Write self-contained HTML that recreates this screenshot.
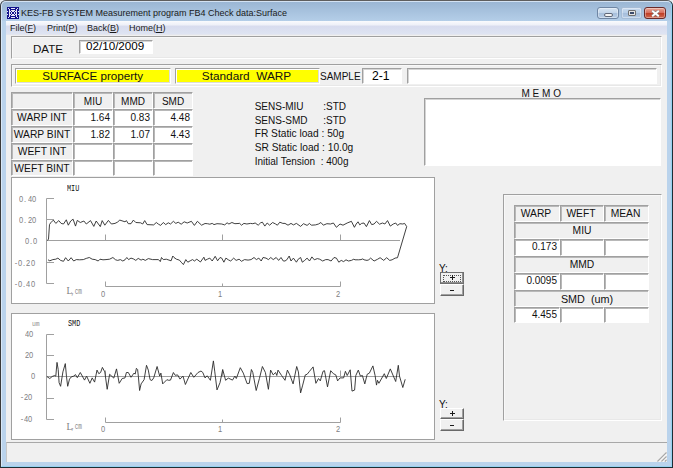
<!DOCTYPE html><html><head><meta charset="utf-8"><style>html,body{margin:0;padding:0;width:673px;height:468px;overflow:hidden;position:relative;background:#e8ecf0;font-family:"Liberation Sans",sans-serif}u{text-decoration:underline}</style></head><body>
<div style="position:absolute;left:0px;top:0px;width:673px;height:468px;background:#bad3ec;border-radius:6px 6px 0 0;"></div>
<div style="position:absolute;left:0px;top:0px;width:673px;height:21px;background:linear-gradient(#98b4d2,#b4cee8);border-radius:6px 6px 0 0;"></div>
<div style="position:absolute;left:0px;top:0px;width:673px;height:468px;box-sizing:border-box;border:1px solid #3a3a3a;border-top-color:#5e5e5e;border-right-color:#1e2e36;border-bottom-color:#1e2e36;border-radius:6px 6px 0 0;"></div>
<div style="position:absolute;left:1px;top:1px;width:671px;height:466px;box-sizing:border-box;border:1px solid rgba(225,238,250,0.8);border-right-color:#96d2f0;border-bottom-color:#96d2f0;border-radius:5px 5px 0 0;"></div>
<svg style="position:absolute;left:7px;top:7px" width="12" height="12" viewBox="0 0 12 12"><rect width="12" height="12" fill="#e8e8f8"/><g fill="#12128c"><rect x="0" y="0" width="1" height="1"/><rect x="1" y="0" width="1" height="1"/><rect x="2" y="0" width="1" height="1"/><rect x="3" y="0" width="1" height="1"/><rect x="4" y="0" width="1" height="1"/><rect x="5" y="0" width="1" height="1"/><rect x="6" y="0" width="1" height="1"/><rect x="7" y="0" width="1" height="1"/><rect x="8" y="0" width="1" height="1"/><rect x="9" y="0" width="1" height="1"/><rect x="10" y="0" width="1" height="1"/><rect x="11" y="0" width="1" height="1"/><rect x="0" y="1" width="1" height="1"/><rect x="2" y="1" width="1" height="1"/><rect x="3" y="1" width="1" height="1"/><rect x="8" y="1" width="1" height="1"/><rect x="9" y="1" width="1" height="1"/><rect x="11" y="1" width="1" height="1"/><rect x="0" y="2" width="1" height="1"/><rect x="1" y="2" width="1" height="1"/><rect x="3" y="2" width="1" height="1"/><rect x="4" y="2" width="1" height="1"/><rect x="5" y="2" width="1" height="1"/><rect x="6" y="2" width="1" height="1"/><rect x="7" y="2" width="1" height="1"/><rect x="8" y="2" width="1" height="1"/><rect x="10" y="2" width="1" height="1"/><rect x="11" y="2" width="1" height="1"/><rect x="0" y="3" width="1" height="1"/><rect x="1" y="3" width="1" height="1"/><rect x="3" y="3" width="1" height="1"/><rect x="8" y="3" width="1" height="1"/><rect x="10" y="3" width="1" height="1"/><rect x="11" y="3" width="1" height="1"/><rect x="1" y="4" width="1" height="1"/><rect x="4" y="4" width="1" height="1"/><rect x="7" y="4" width="1" height="1"/><rect x="10" y="4" width="1" height="1"/><rect x="0" y="5" width="1" height="1"/><rect x="1" y="5" width="1" height="1"/><rect x="3" y="5" width="1" height="1"/><rect x="5" y="5" width="1" height="1"/><rect x="6" y="5" width="1" height="1"/><rect x="8" y="5" width="1" height="1"/><rect x="10" y="5" width="1" height="1"/><rect x="11" y="5" width="1" height="1"/><rect x="0" y="6" width="1" height="1"/><rect x="1" y="6" width="1" height="1"/><rect x="3" y="6" width="1" height="1"/><rect x="5" y="6" width="1" height="1"/><rect x="6" y="6" width="1" height="1"/><rect x="8" y="6" width="1" height="1"/><rect x="10" y="6" width="1" height="1"/><rect x="11" y="6" width="1" height="1"/><rect x="1" y="7" width="1" height="1"/><rect x="4" y="7" width="1" height="1"/><rect x="7" y="7" width="1" height="1"/><rect x="10" y="7" width="1" height="1"/><rect x="0" y="8" width="1" height="1"/><rect x="1" y="8" width="1" height="1"/><rect x="3" y="8" width="1" height="1"/><rect x="8" y="8" width="1" height="1"/><rect x="10" y="8" width="1" height="1"/><rect x="11" y="8" width="1" height="1"/><rect x="0" y="9" width="1" height="1"/><rect x="1" y="9" width="1" height="1"/><rect x="3" y="9" width="1" height="1"/><rect x="4" y="9" width="1" height="1"/><rect x="5" y="9" width="1" height="1"/><rect x="6" y="9" width="1" height="1"/><rect x="7" y="9" width="1" height="1"/><rect x="8" y="9" width="1" height="1"/><rect x="10" y="9" width="1" height="1"/><rect x="11" y="9" width="1" height="1"/><rect x="0" y="10" width="1" height="1"/><rect x="2" y="10" width="1" height="1"/><rect x="3" y="10" width="1" height="1"/><rect x="8" y="10" width="1" height="1"/><rect x="9" y="10" width="1" height="1"/><rect x="11" y="10" width="1" height="1"/><rect x="0" y="11" width="1" height="1"/><rect x="1" y="11" width="1" height="1"/><rect x="2" y="11" width="1" height="1"/><rect x="3" y="11" width="1" height="1"/><rect x="4" y="11" width="1" height="1"/><rect x="5" y="11" width="1" height="1"/><rect x="6" y="11" width="1" height="1"/><rect x="7" y="11" width="1" height="1"/><rect x="8" y="11" width="1" height="1"/><rect x="9" y="11" width="1" height="1"/><rect x="10" y="11" width="1" height="1"/><rect x="11" y="11" width="1" height="1"/></g></svg>
<div style="position:absolute;left:21.00px;top:9.18px;font-size:9px;line-height:9px;white-space:pre;font-family:'Liberation Sans', sans-serif;color:#1a1a1a;">KES-FB SYSTEM Measurement program FB4 Check data:Surface</div>
<div style="position:absolute;left:597px;top:7px;width:22px;height:12px;box-sizing:border-box;border:1px solid #6f86a4;border-radius:3px;background:linear-gradient(#d6e4f2,#c4d6ea 45%,#a8c0dc 55%,#b8cde6);box-shadow:inset 0 0 0 1px rgba(255,255,255,0.35);"><div style="position:absolute;left:6px;top:5px;width:9px;height:4px;background:#f4f4f4;border:1px solid #606878;border-radius:2px;box-sizing:border-box"></div></div>
<div style="position:absolute;left:621px;top:7px;width:21px;height:12px;box-sizing:border-box;border:1px solid #a6bcd6;border-radius:2px;background:linear-gradient(#c8daee,#b8cee8 45%,#a6bedb 55%,#b4cae4);box-shadow:inset 0 0 0 1px rgba(255,255,255,0.35);"><div style="position:absolute;left:6px;top:2px;width:8px;height:6px;background:#e4e4e4;border:1px solid #707070;box-sizing:border-box;border-radius:1px"><div style="margin:1px 1px;height:2px;background:#3a4a6a"></div></div></div>
<div style="position:absolute;left:644px;top:7px;width:22px;height:12px;box-sizing:border-box;border:1px solid #6a2a2a;border-radius:3px;background:linear-gradient(#e8a898,#d87060 45%,#c04028 55%,#d06850);box-shadow:inset 0 0 0 1px rgba(255,255,255,0.35);"><svg style="position:absolute;left:6px;top:2px" width="9" height="7"><path d="M1.2 0.8L7.8 6.2M7.8 0.8L1.2 6.2" stroke="#808080" stroke-width="3"/><path d="M1.2 0.8L7.8 6.2M7.8 0.8L1.2 6.2" stroke="#fff" stroke-width="1.8"/></svg></div>
<div style="position:absolute;left:6px;top:21px;width:661px;height:13px;background:linear-gradient(#fafbfd,#eef0f8 30%,#d8dcee 40%,#dee4f2);"></div>
<div style="position:absolute;left:6px;top:34px;width:661px;height:1px;background:#e4e6ee;"></div>
<div style="position:absolute;left:10.00px;top:24.28px;font-size:9px;line-height:9px;white-space:pre;font-family:'Liberation Sans', sans-serif;color:#1a1a1a;">File(<u>F</u>)</div>
<div style="position:absolute;left:47.00px;top:24.28px;font-size:9px;line-height:9px;white-space:pre;font-family:'Liberation Sans', sans-serif;color:#1a1a1a;">Print(<u>P</u>)</div>
<div style="position:absolute;left:87.00px;top:24.28px;font-size:9px;line-height:9px;white-space:pre;font-family:'Liberation Sans', sans-serif;color:#1a1a1a;">Back(<u>B</u>)</div>
<div style="position:absolute;left:129.00px;top:24.28px;font-size:9px;line-height:9px;white-space:pre;font-family:'Liberation Sans', sans-serif;color:#1a1a1a;">Home(<u>H</u>)</div>
<div style="position:absolute;left:6px;top:35px;width:661px;height:427px;background:#f0f0f0;"></div>
<div style="position:absolute;left:11px;top:36px;width:651px;height:23px;box-sizing:border-box;border-top:1px solid #a0a0a0;border-left:1px solid #a0a0a0;border-right:1px solid #fff;border-bottom:1px solid #fff;"></div>
<div style="position:absolute;left:12px;top:37px;width:649px;height:21px;box-sizing:border-box;border-top:1px solid #f8f8f8;border-left:1px solid #f8f8f8;border-right:1px solid #e8e8e8;border-bottom:1px solid #e8e8e8;"></div>
<div style="position:absolute;left:33.00px;top:42.98px;font-size:11.6px;line-height:11.6px;white-space:pre;font-family:'Liberation Sans', sans-serif;color:#111;">DATE</div>
<div style="position:absolute;left:79px;top:40px;width:74px;height:14px;box-sizing:border-box;background:#fff;border-top:1px solid #a0a0a0;border-left:1px solid #a0a0a0;border-right:1px solid #fff;border-bottom:1px solid #fff;box-shadow:inset 1px 1px 0 #d4d4d4;"></div>
<div style="position:absolute;left:86.00px;top:40.24px;font-size:11.65px;line-height:11.65px;white-space:pre;font-family:'Liberation Sans', sans-serif;color:#000;">02/10/2009</div>
<div style="position:absolute;left:11px;top:64px;width:651px;height:23px;box-sizing:border-box;border-top:1px solid #a0a0a0;border-left:1px solid #a0a0a0;border-right:1px solid #fff;border-bottom:1px solid #fff;"></div>
<div style="position:absolute;left:12px;top:65px;width:649px;height:21px;box-sizing:border-box;border-top:1px solid #f8f8f8;border-left:1px solid #f8f8f8;border-right:1px solid #e8e8e8;border-bottom:1px solid #e8e8e8;"></div>
<div style="position:absolute;left:15px;top:68px;width:156px;height:16px;box-sizing:border-box;background:#ffff00;border-top:1px solid #a0a0a0;border-left:1px solid #a0a0a0;border-right:1px solid #fff;border-bottom:1px solid #fff;box-shadow:inset 1px 1px 0 #fff, inset -1px -1px 0 #dcdcdc;"></div>
<div style="position:absolute;left:15.20px;top:70.14px;font-size:11.65px;line-height:11.65px;white-space:pre;font-family:'Liberation Sans', sans-serif;width:155px;text-align:center;color:#111;">SURFACE property</div>
<div style="position:absolute;left:175px;top:68px;width:145px;height:16px;box-sizing:border-box;background:#ffff00;border-top:1px solid #a0a0a0;border-left:1px solid #a0a0a0;border-right:1px solid #fff;border-bottom:1px solid #fff;box-shadow:inset 1px 1px 0 #fff, inset -1px -1px 0 #dcdcdc;"></div>
<div style="position:absolute;left:174.50px;top:71.31px;font-size:11.8px;line-height:11.8px;white-space:pre;font-family:'Liberation Sans', sans-serif;width:144px;text-align:center;color:#111;">Standard  WARP</div>
<div style="position:absolute;left:320.00px;top:71.73px;font-size:10px;line-height:10px;white-space:pre;font-family:'Liberation Sans', sans-serif;color:#111;">SAMPLE</div>
<div style="position:absolute;left:362px;top:68px;width:40px;height:16px;box-sizing:border-box;background:#fff;border-top:1px solid #a0a0a0;border-left:1px solid #a0a0a0;border-right:1px solid #fff;border-bottom:1px solid #fff;box-shadow:inset 1px 1px 0 #d4d4d4;"></div>
<div style="position:absolute;left:372.00px;top:70.17px;font-size:12.2px;line-height:12.2px;white-space:pre;font-family:'Liberation Sans', sans-serif;color:#000;">2-1</div>
<div style="position:absolute;left:407px;top:68px;width:250px;height:16px;box-sizing:border-box;background:#fff;border-top:1px solid #a0a0a0;border-left:1px solid #a0a0a0;border-right:1px solid #fff;border-bottom:1px solid #fff;box-shadow:inset 1px 1px 0 #d4d4d4;"></div>
<div style="position:absolute;left:11px;top:92px;width:62px;height:17px;box-sizing:border-box;background:#f0f0f0;border-top:1px solid #a0a0a0;border-left:1px solid #a0a0a0;border-right:1px solid #fff;border-bottom:1px solid #fff;box-shadow:inset 1px 1px 0 #b8b8b8;"></div>
<div style="position:absolute;left:73px;top:92px;width:40px;height:17px;box-sizing:border-box;background:#f0f0f0;border-top:1px solid #a0a0a0;border-left:1px solid #a0a0a0;border-right:1px solid #fff;border-bottom:1px solid #fff;box-shadow:inset 1px 1px 0 #b8b8b8;"></div>
<div style="position:absolute;left:73.00px;top:96.84px;font-size:10px;line-height:10px;white-space:pre;font-family:'Liberation Sans', sans-serif;width:40px;text-align:center;color:#111;">MIU</div>
<div style="position:absolute;left:113px;top:92px;width:40px;height:17px;box-sizing:border-box;background:#f0f0f0;border-top:1px solid #a0a0a0;border-left:1px solid #a0a0a0;border-right:1px solid #fff;border-bottom:1px solid #fff;box-shadow:inset 1px 1px 0 #b8b8b8;"></div>
<div style="position:absolute;left:113.00px;top:96.84px;font-size:10px;line-height:10px;white-space:pre;font-family:'Liberation Sans', sans-serif;width:40px;text-align:center;color:#111;">MMD</div>
<div style="position:absolute;left:153px;top:92px;width:40px;height:17px;box-sizing:border-box;background:#f0f0f0;border-top:1px solid #a0a0a0;border-left:1px solid #a0a0a0;border-right:1px solid #fff;border-bottom:1px solid #fff;box-shadow:inset 1px 1px 0 #b8b8b8;"></div>
<div style="position:absolute;left:153.00px;top:96.84px;font-size:10px;line-height:10px;white-space:pre;font-family:'Liberation Sans', sans-serif;width:40px;text-align:center;color:#111;">SMD</div>
<div style="position:absolute;left:11px;top:109px;width:62px;height:17px;box-sizing:border-box;background:#f0f0f0;border-top:1px solid #a0a0a0;border-left:1px solid #a0a0a0;border-right:1px solid #fff;border-bottom:1px solid #fff;box-shadow:inset 1px 1px 0 #b8b8b8;"></div>
<div style="position:absolute;left:11.00px;top:113.38px;font-size:10.3px;line-height:10.3px;white-space:pre;font-family:'Liberation Sans', sans-serif;width:62px;text-align:center;color:#111;">WARP INT</div>
<div style="position:absolute;left:73px;top:109px;width:40px;height:17px;box-sizing:border-box;background:#fff;border-top:1px solid #a0a0a0;border-left:1px solid #a0a0a0;border-right:1px solid #fff;border-bottom:1px solid #fff;box-shadow:inset 1px 1px 0 #b8b8b8;"></div>
<div style="position:absolute;left:72.00px;top:113.03px;font-size:10px;line-height:10px;white-space:pre;font-family:'Liberation Sans', sans-serif;width:38px;text-align:right;color:#111;">1.64</div>
<div style="position:absolute;left:113px;top:109px;width:40px;height:17px;box-sizing:border-box;background:#fff;border-top:1px solid #a0a0a0;border-left:1px solid #a0a0a0;border-right:1px solid #fff;border-bottom:1px solid #fff;box-shadow:inset 1px 1px 0 #b8b8b8;"></div>
<div style="position:absolute;left:112.00px;top:113.03px;font-size:10px;line-height:10px;white-space:pre;font-family:'Liberation Sans', sans-serif;width:38px;text-align:right;color:#111;">0.83</div>
<div style="position:absolute;left:153px;top:109px;width:40px;height:17px;box-sizing:border-box;background:#fff;border-top:1px solid #a0a0a0;border-left:1px solid #a0a0a0;border-right:1px solid #fff;border-bottom:1px solid #fff;box-shadow:inset 1px 1px 0 #b8b8b8;"></div>
<div style="position:absolute;left:152.00px;top:113.03px;font-size:10px;line-height:10px;white-space:pre;font-family:'Liberation Sans', sans-serif;width:38px;text-align:right;color:#111;">4.48</div>
<div style="position:absolute;left:11px;top:126px;width:62px;height:17px;box-sizing:border-box;background:#f0f0f0;border-top:1px solid #a0a0a0;border-left:1px solid #a0a0a0;border-right:1px solid #fff;border-bottom:1px solid #fff;box-shadow:inset 1px 1px 0 #b8b8b8;"></div>
<div style="position:absolute;left:11.00px;top:130.38px;font-size:10.3px;line-height:10.3px;white-space:pre;font-family:'Liberation Sans', sans-serif;width:62px;text-align:center;color:#111;">WARP BINT</div>
<div style="position:absolute;left:73px;top:126px;width:40px;height:17px;box-sizing:border-box;background:#fff;border-top:1px solid #a0a0a0;border-left:1px solid #a0a0a0;border-right:1px solid #fff;border-bottom:1px solid #fff;box-shadow:inset 1px 1px 0 #b8b8b8;"></div>
<div style="position:absolute;left:72.00px;top:130.03px;font-size:10px;line-height:10px;white-space:pre;font-family:'Liberation Sans', sans-serif;width:38px;text-align:right;color:#111;">1.82</div>
<div style="position:absolute;left:113px;top:126px;width:40px;height:17px;box-sizing:border-box;background:#fff;border-top:1px solid #a0a0a0;border-left:1px solid #a0a0a0;border-right:1px solid #fff;border-bottom:1px solid #fff;box-shadow:inset 1px 1px 0 #b8b8b8;"></div>
<div style="position:absolute;left:112.00px;top:130.03px;font-size:10px;line-height:10px;white-space:pre;font-family:'Liberation Sans', sans-serif;width:38px;text-align:right;color:#111;">1.07</div>
<div style="position:absolute;left:153px;top:126px;width:40px;height:17px;box-sizing:border-box;background:#fff;border-top:1px solid #a0a0a0;border-left:1px solid #a0a0a0;border-right:1px solid #fff;border-bottom:1px solid #fff;box-shadow:inset 1px 1px 0 #b8b8b8;"></div>
<div style="position:absolute;left:152.00px;top:130.03px;font-size:10px;line-height:10px;white-space:pre;font-family:'Liberation Sans', sans-serif;width:38px;text-align:right;color:#111;">4.43</div>
<div style="position:absolute;left:11px;top:143px;width:62px;height:17px;box-sizing:border-box;background:#f0f0f0;border-top:1px solid #a0a0a0;border-left:1px solid #a0a0a0;border-right:1px solid #fff;border-bottom:1px solid #fff;box-shadow:inset 1px 1px 0 #b8b8b8;"></div>
<div style="position:absolute;left:11.00px;top:147.38px;font-size:10.3px;line-height:10.3px;white-space:pre;font-family:'Liberation Sans', sans-serif;width:62px;text-align:center;color:#111;">WEFT INT</div>
<div style="position:absolute;left:73px;top:143px;width:40px;height:17px;box-sizing:border-box;background:#fff;border-top:1px solid #a0a0a0;border-left:1px solid #a0a0a0;border-right:1px solid #fff;border-bottom:1px solid #fff;box-shadow:inset 1px 1px 0 #b8b8b8;"></div>
<div style="position:absolute;left:113px;top:143px;width:40px;height:17px;box-sizing:border-box;background:#fff;border-top:1px solid #a0a0a0;border-left:1px solid #a0a0a0;border-right:1px solid #fff;border-bottom:1px solid #fff;box-shadow:inset 1px 1px 0 #b8b8b8;"></div>
<div style="position:absolute;left:153px;top:143px;width:40px;height:17px;box-sizing:border-box;background:#fff;border-top:1px solid #a0a0a0;border-left:1px solid #a0a0a0;border-right:1px solid #fff;border-bottom:1px solid #fff;box-shadow:inset 1px 1px 0 #b8b8b8;"></div>
<div style="position:absolute;left:11px;top:160px;width:62px;height:16px;box-sizing:border-box;background:#f0f0f0;border-top:1px solid #a0a0a0;border-left:1px solid #a0a0a0;border-right:1px solid #fff;border-bottom:1px solid #fff;box-shadow:inset 1px 1px 0 #b8b8b8;"></div>
<div style="position:absolute;left:11.00px;top:164.38px;font-size:10.3px;line-height:10.3px;white-space:pre;font-family:'Liberation Sans', sans-serif;width:62px;text-align:center;color:#111;">WEFT BINT</div>
<div style="position:absolute;left:73px;top:160px;width:40px;height:16px;box-sizing:border-box;background:#fff;border-top:1px solid #a0a0a0;border-left:1px solid #a0a0a0;border-right:1px solid #fff;border-bottom:1px solid #fff;box-shadow:inset 1px 1px 0 #b8b8b8;"></div>
<div style="position:absolute;left:113px;top:160px;width:40px;height:16px;box-sizing:border-box;background:#fff;border-top:1px solid #a0a0a0;border-left:1px solid #a0a0a0;border-right:1px solid #fff;border-bottom:1px solid #fff;box-shadow:inset 1px 1px 0 #b8b8b8;"></div>
<div style="position:absolute;left:153px;top:160px;width:40px;height:16px;box-sizing:border-box;background:#fff;border-top:1px solid #a0a0a0;border-left:1px solid #a0a0a0;border-right:1px solid #fff;border-bottom:1px solid #fff;box-shadow:inset 1px 1px 0 #b8b8b8;"></div>
<div style="position:absolute;left:254.70px;top:101.73px;font-size:10px;line-height:10px;white-space:pre;font-family:'Liberation Sans', sans-serif;color:#111;">SENS-MIU</div>
<div style="position:absolute;left:323.20px;top:101.73px;font-size:10px;line-height:10px;white-space:pre;font-family:'Liberation Sans', sans-serif;color:#111;">:STD</div>
<div style="position:absolute;left:254.70px;top:115.94px;font-size:10px;line-height:10px;white-space:pre;font-family:'Liberation Sans', sans-serif;color:#111;">SENS-SMD</div>
<div style="position:absolute;left:323.20px;top:115.94px;font-size:10px;line-height:10px;white-space:pre;font-family:'Liberation Sans', sans-serif;color:#111;">:STD</div>
<div style="position:absolute;left:254.70px;top:129.17px;font-size:10.2px;line-height:10.2px;white-space:pre;font-family:'Liberation Sans', sans-serif;color:#111;">FR Static load : 50g</div>
<div style="position:absolute;left:254.70px;top:142.87px;font-size:10.2px;line-height:10.2px;white-space:pre;font-family:'Liberation Sans', sans-serif;color:#111;">SR Static load : 10.0g</div>
<div style="position:absolute;left:254.70px;top:156.63px;font-size:10px;line-height:10px;white-space:pre;font-family:'Liberation Sans', sans-serif;color:#111;">Initial Tension  : 400g</div>
<div style="position:absolute;left:521.50px;top:89.14px;font-size:10px;line-height:10px;white-space:pre;font-family:'Liberation Sans', sans-serif;color:#111;">M E M O</div>
<div style="position:absolute;left:424px;top:98px;width:237px;height:68px;box-sizing:border-box;background:#fff;border-top:1px solid #a0a0a0;border-left:1px solid #a0a0a0;border-right:1px solid #fff;border-bottom:1px solid #fff;box-shadow:inset 1px 1px 0 #d4d4d4;"></div>
<div style="position:absolute;left:11px;top:177px;width:424px;height:127px;box-sizing:border-box;background:#fff;border:1px solid #a0a0a0;"></div>
<svg style="position:absolute;left:0;top:0" width="673" height="468"><path d="M46.5 198.5V283.5M46.5 198.5H54M46.5 283.5H54M46.5 219.5H54M46.5 262.5H54" stroke="#a0a0a0" fill="none"/><path d="M46.5 240.5H400" stroke="#a0a0a0" fill="none"/><path d="M105.5 240.5v-6M222.5 240.5v-6M340.5 240.5v-6" stroke="#a0a0a0" fill="none"/><path d="M105.5 281.5V286.5H340.5V281.5M222.5 286.5v-3" stroke="#a0a0a0" fill="none"/></svg>
<div style="position:absolute;left:19.40px;top:193.59px;font-size:9.6px;line-height:9.6px;white-space:pre;font-family:'Liberation Sans', sans-serif;width:5.205128205128204px;text-align:center;transform:scaleX(0.78);transform-origin:0 0;color:#808080;">0</div>
<div style="position:absolute;left:23.46px;top:193.59px;font-size:9.6px;line-height:9.6px;white-space:pre;font-family:'Liberation Sans', sans-serif;width:5.205128205128204px;text-align:center;transform:scaleX(0.78);transform-origin:0 0;color:#808080;">.</div>
<div style="position:absolute;left:27.52px;top:193.59px;font-size:9.6px;line-height:9.6px;white-space:pre;font-family:'Liberation Sans', sans-serif;width:5.205128205128204px;text-align:center;transform:scaleX(0.78);transform-origin:0 0;color:#808080;">4</div>
<div style="position:absolute;left:31.58px;top:193.59px;font-size:9.6px;line-height:9.6px;white-space:pre;font-family:'Liberation Sans', sans-serif;width:5.205128205128204px;text-align:center;transform:scaleX(0.78);transform-origin:0 0;color:#808080;">0</div>
<div style="position:absolute;left:19.40px;top:214.99px;font-size:9.6px;line-height:9.6px;white-space:pre;font-family:'Liberation Sans', sans-serif;width:5.205128205128204px;text-align:center;transform:scaleX(0.78);transform-origin:0 0;color:#808080;">0</div>
<div style="position:absolute;left:23.46px;top:214.99px;font-size:9.6px;line-height:9.6px;white-space:pre;font-family:'Liberation Sans', sans-serif;width:5.205128205128204px;text-align:center;transform:scaleX(0.78);transform-origin:0 0;color:#808080;">.</div>
<div style="position:absolute;left:27.52px;top:214.99px;font-size:9.6px;line-height:9.6px;white-space:pre;font-family:'Liberation Sans', sans-serif;width:5.205128205128204px;text-align:center;transform:scaleX(0.78);transform-origin:0 0;color:#808080;">2</div>
<div style="position:absolute;left:31.58px;top:214.99px;font-size:9.6px;line-height:9.6px;white-space:pre;font-family:'Liberation Sans', sans-serif;width:5.205128205128204px;text-align:center;transform:scaleX(0.78);transform-origin:0 0;color:#808080;">0</div>
<div style="position:absolute;left:25.30px;top:236.29px;font-size:9.6px;line-height:9.6px;white-space:pre;font-family:'Liberation Sans', sans-serif;width:5.205128205128204px;text-align:center;transform:scaleX(0.78);transform-origin:0 0;color:#808080;">0</div>
<div style="position:absolute;left:29.36px;top:236.29px;font-size:9.6px;line-height:9.6px;white-space:pre;font-family:'Liberation Sans', sans-serif;width:5.205128205128204px;text-align:center;transform:scaleX(0.78);transform-origin:0 0;color:#808080;">.</div>
<div style="position:absolute;left:33.42px;top:236.29px;font-size:9.6px;line-height:9.6px;white-space:pre;font-family:'Liberation Sans', sans-serif;width:5.205128205128204px;text-align:center;transform:scaleX(0.78);transform-origin:0 0;color:#808080;">0</div>
<div style="position:absolute;left:14.30px;top:257.69px;font-size:9.6px;line-height:9.6px;white-space:pre;font-family:'Liberation Sans', sans-serif;width:5.205128205128204px;text-align:center;transform:scaleX(0.78);transform-origin:0 0;color:#808080;">-</div>
<div style="position:absolute;left:18.36px;top:257.69px;font-size:9.6px;line-height:9.6px;white-space:pre;font-family:'Liberation Sans', sans-serif;width:5.205128205128204px;text-align:center;transform:scaleX(0.78);transform-origin:0 0;color:#808080;">0</div>
<div style="position:absolute;left:22.42px;top:257.69px;font-size:9.6px;line-height:9.6px;white-space:pre;font-family:'Liberation Sans', sans-serif;width:5.205128205128204px;text-align:center;transform:scaleX(0.78);transform-origin:0 0;color:#808080;">.</div>
<div style="position:absolute;left:26.48px;top:257.69px;font-size:9.6px;line-height:9.6px;white-space:pre;font-family:'Liberation Sans', sans-serif;width:5.205128205128204px;text-align:center;transform:scaleX(0.78);transform-origin:0 0;color:#808080;">2</div>
<div style="position:absolute;left:30.54px;top:257.69px;font-size:9.6px;line-height:9.6px;white-space:pre;font-family:'Liberation Sans', sans-serif;width:5.205128205128204px;text-align:center;transform:scaleX(0.78);transform-origin:0 0;color:#808080;">0</div>
<div style="position:absolute;left:14.30px;top:278.59px;font-size:9.6px;line-height:9.6px;white-space:pre;font-family:'Liberation Sans', sans-serif;width:5.205128205128204px;text-align:center;transform:scaleX(0.78);transform-origin:0 0;color:#808080;">-</div>
<div style="position:absolute;left:18.36px;top:278.59px;font-size:9.6px;line-height:9.6px;white-space:pre;font-family:'Liberation Sans', sans-serif;width:5.205128205128204px;text-align:center;transform:scaleX(0.78);transform-origin:0 0;color:#808080;">0</div>
<div style="position:absolute;left:22.42px;top:278.59px;font-size:9.6px;line-height:9.6px;white-space:pre;font-family:'Liberation Sans', sans-serif;width:5.205128205128204px;text-align:center;transform:scaleX(0.78);transform-origin:0 0;color:#808080;">.</div>
<div style="position:absolute;left:26.48px;top:278.59px;font-size:9.6px;line-height:9.6px;white-space:pre;font-family:'Liberation Sans', sans-serif;width:5.205128205128204px;text-align:center;transform:scaleX(0.78);transform-origin:0 0;color:#808080;">4</div>
<div style="position:absolute;left:30.54px;top:278.59px;font-size:9.6px;line-height:9.6px;white-space:pre;font-family:'Liberation Sans', sans-serif;width:5.205128205128204px;text-align:center;transform:scaleX(0.78);transform-origin:0 0;color:#808080;">0</div>
<div style="position:absolute;left:67.40px;top:184.28px;font-size:9.5px;line-height:9.5px;white-space:pre;font-family:'Liberation Mono', monospace;transform:scaleX(0.72);transform-origin:0 0;color:#111;">MIU</div>
<div style="position:absolute;left:66.60px;top:286.72px;font-size:9.5px;line-height:9.5px;white-space:pre;font-family:'Liberation Serif', serif;color:#808080;">L</div>
<div style="position:absolute;left:71.30px;top:286.52px;font-size:9.5px;line-height:9.5px;white-space:pre;font-family:'Liberation Mono', monospace;transform:scaleX(0.64);transform-origin:0 0;color:#888;">,cm</div>
<div style="position:absolute;left:101.00px;top:288.59px;font-size:9.6px;line-height:9.6px;white-space:pre;font-family:'Liberation Sans', sans-serif;width:5.205128205128204px;text-align:center;transform:scaleX(0.78);transform-origin:0 0;color:#808080;">0</div>
<div style="position:absolute;left:218.00px;top:288.59px;font-size:9.6px;line-height:9.6px;white-space:pre;font-family:'Liberation Sans', sans-serif;width:5.205128205128204px;text-align:center;transform:scaleX(0.78);transform-origin:0 0;color:#808080;">1</div>
<div style="position:absolute;left:335.50px;top:288.59px;font-size:9.6px;line-height:9.6px;white-space:pre;font-family:'Liberation Sans', sans-serif;width:5.205128205128204px;text-align:center;transform:scaleX(0.78);transform-origin:0 0;color:#808080;">2</div>
<div style="position:absolute;left:11px;top:313px;width:424px;height:127px;box-sizing:border-box;background:#fff;border:1px solid #a0a0a0;"></div>
<svg style="position:absolute;left:0;top:0" width="673" height="468"><path d="M46.5 334.5V419.5M46.5 334.5H54M46.5 419.5H54M46.5 355.5H54M46.5 398.5H54" stroke="#a0a0a0" fill="none"/><path d="M46.5 376.5H400" stroke="#a0a0a0" fill="none"/><path d="M105.5 376.5v-6M222.5 376.5v-6M340.5 376.5v-6" stroke="#a0a0a0" fill="none"/><path d="M105.5 417.5V422.5H340.5V417.5M222.5 422.5v-3" stroke="#a0a0a0" fill="none"/></svg>
<div style="position:absolute;left:24.50px;top:329.49px;font-size:9.6px;line-height:9.6px;white-space:pre;font-family:'Liberation Sans', sans-serif;width:5.205128205128204px;text-align:center;transform:scaleX(0.78);transform-origin:0 0;color:#808080;">4</div>
<div style="position:absolute;left:28.56px;top:329.49px;font-size:9.6px;line-height:9.6px;white-space:pre;font-family:'Liberation Sans', sans-serif;width:5.205128205128204px;text-align:center;transform:scaleX(0.78);transform-origin:0 0;color:#808080;">0</div>
<div style="position:absolute;left:25.30px;top:350.19px;font-size:9.6px;line-height:9.6px;white-space:pre;font-family:'Liberation Sans', sans-serif;width:5.205128205128204px;text-align:center;transform:scaleX(0.78);transform-origin:0 0;color:#808080;">2</div>
<div style="position:absolute;left:29.36px;top:350.19px;font-size:9.6px;line-height:9.6px;white-space:pre;font-family:'Liberation Sans', sans-serif;width:5.205128205128204px;text-align:center;transform:scaleX(0.78);transform-origin:0 0;color:#808080;">0</div>
<div style="position:absolute;left:30.50px;top:370.99px;font-size:9.6px;line-height:9.6px;white-space:pre;font-family:'Liberation Sans', sans-serif;width:5.205128205128204px;text-align:center;transform:scaleX(0.78);transform-origin:0 0;color:#808080;">0</div>
<div style="position:absolute;left:19.80px;top:392.49px;font-size:9.6px;line-height:9.6px;white-space:pre;font-family:'Liberation Sans', sans-serif;width:5.205128205128204px;text-align:center;transform:scaleX(0.78);transform-origin:0 0;color:#808080;">-</div>
<div style="position:absolute;left:23.86px;top:392.49px;font-size:9.6px;line-height:9.6px;white-space:pre;font-family:'Liberation Sans', sans-serif;width:5.205128205128204px;text-align:center;transform:scaleX(0.78);transform-origin:0 0;color:#808080;">2</div>
<div style="position:absolute;left:27.92px;top:392.49px;font-size:9.6px;line-height:9.6px;white-space:pre;font-family:'Liberation Sans', sans-serif;width:5.205128205128204px;text-align:center;transform:scaleX(0.78);transform-origin:0 0;color:#808080;">0</div>
<div style="position:absolute;left:19.80px;top:413.59px;font-size:9.6px;line-height:9.6px;white-space:pre;font-family:'Liberation Sans', sans-serif;width:5.205128205128204px;text-align:center;transform:scaleX(0.78);transform-origin:0 0;color:#808080;">-</div>
<div style="position:absolute;left:23.86px;top:413.59px;font-size:9.6px;line-height:9.6px;white-space:pre;font-family:'Liberation Sans', sans-serif;width:5.205128205128204px;text-align:center;transform:scaleX(0.78);transform-origin:0 0;color:#808080;">4</div>
<div style="position:absolute;left:27.92px;top:413.59px;font-size:9.6px;line-height:9.6px;white-space:pre;font-family:'Liberation Sans', sans-serif;width:5.205128205128204px;text-align:center;transform:scaleX(0.78);transform-origin:0 0;color:#808080;">0</div>
<div style="position:absolute;left:67.60px;top:319.18px;font-size:9.5px;line-height:9.5px;white-space:pre;font-family:'Liberation Mono', monospace;transform:scaleX(0.72);transform-origin:0 0;color:#111;">SMD</div>
<div style="position:absolute;left:31.70px;top:320.04px;font-size:8px;line-height:8px;white-space:pre;font-family:'Liberation Mono', monospace;transform:scaleX(0.8);transform-origin:0 0;color:#909090;">um</div>
<div style="position:absolute;left:66.60px;top:422.62px;font-size:9.5px;line-height:9.5px;white-space:pre;font-family:'Liberation Serif', serif;color:#808080;">L</div>
<div style="position:absolute;left:71.30px;top:422.42px;font-size:9.5px;line-height:9.5px;white-space:pre;font-family:'Liberation Mono', monospace;transform:scaleX(0.64);transform-origin:0 0;color:#888;">,cm</div>
<div style="position:absolute;left:101.00px;top:423.99px;font-size:9.6px;line-height:9.6px;white-space:pre;font-family:'Liberation Sans', sans-serif;width:5.205128205128204px;text-align:center;transform:scaleX(0.78);transform-origin:0 0;color:#808080;">0</div>
<div style="position:absolute;left:218.00px;top:423.99px;font-size:9.6px;line-height:9.6px;white-space:pre;font-family:'Liberation Sans', sans-serif;width:5.205128205128204px;text-align:center;transform:scaleX(0.78);transform-origin:0 0;color:#808080;">1</div>
<div style="position:absolute;left:335.50px;top:423.99px;font-size:9.6px;line-height:9.6px;white-space:pre;font-family:'Liberation Sans', sans-serif;width:5.205128205128204px;text-align:center;transform:scaleX(0.78);transform-origin:0 0;color:#808080;">2</div>
<svg style="position:absolute;left:0;top:0" width="673" height="468"><polyline points="47.5,240.5 48.5,239.0 49.5,224.6 50.7,222.8 53.4,220.1 55.8,223.4 58.8,220.6 61.1,223.4 63.5,224.0 66.3,219.8 68.3,225.2 70.7,221.0 73.1,219.2 75.5,226.1 77.3,220.4 80.3,222.5 83.9,221.0 86.3,224.0 90.5,220.6 93.8,226.4 96.2,221.0 100.3,226.6 102.2,220.6 104.8,225.2 108.4,220.4 111.4,224.0 115.0,223.4 117.4,222.2 119.8,220.1 125.0,221.8 126.4,220.6 128.3,223.7 131.0,223.7 133.4,220.1 135.8,222.5 140.6,222.8 142.7,224.0 144.7,220.6 147.1,224.6 153.7,224.9 156.3,222.5 158.5,224.2 160.6,225.4 163.3,222.5 165.7,224.6 168.3,222.8 170.5,224.0 173.4,221.3 175.8,223.4 178.2,222.2 181.2,224.2 184.2,221.8 187.2,223.0 191.4,221.3 194.4,225.4 197.4,221.3 201.6,225.2 205.0,223.5 207.4,223.7 209.8,224.2 212.2,223.4 214.0,224.6 217.0,223.7 221.7,224.0 224.7,224.9 227.1,222.8 228.9,224.0 231.9,222.5 234.9,223.7 239.7,223.4 241.5,225.2 243.9,223.4 246.9,224.0 250.5,223.4 252.8,223.7 255.2,223.0 258.2,225.2 260.6,222.8 262.4,222.2 264.8,226.1 267.2,223.0 269.6,225.2 272.6,222.5 275.6,224.0 277.4,225.2 279.8,222.2 282.8,223.4 285.0,223.4 288.0,225.2 291.0,223.4 293.4,224.9 296.4,223.4 300.6,226.4 303.5,223.7 307.1,225.4 309.5,223.4 311.3,225.2 315.5,224.9 318.5,224.0 320.9,222.5 323.3,225.2 326.9,223.7 330.5,224.0 333.4,223.0 336.4,227.3 340.0,224.0 343.0,225.2 347.2,223.0 351.4,221.3 354.4,227.3 356.2,224.0 358.0,221.8 359.8,224.9 361.6,223.4 364.0,223.0 366.4,226.6 369.4,220.6 371.7,224.6 374.1,224.0 376.5,221.3 379.5,224.2 382.5,223.0 384.9,224.0 387.5,220.6 390.3,226.1 393.3,224.0 395.7,223.0 397.5,225.4 399.9,223.7 402.8,224.0 404.6,223.4 406.7,226.6 397.5,257.7 397.5,257.7 395.1,258.1 392.1,259.8 389.7,260.4 386.7,257.7 383.7,260.4 380.1,257.7 377.7,259.2 374.1,261.0 370.6,258.1 368.8,259.8 367.0,260.4 364.0,259.8 362.8,258.9 361.0,259.6 358.6,259.8 355.0,259.8 353.8,259.2 351.4,260.4 348.4,261.0 346.0,259.8 343.6,261.6 341.2,260.4 338.8,262.2 336.4,258.1 334.0,257.5 331.1,261.0 328.1,259.6 325.7,259.6 322.7,261.0 319.7,259.2 317.3,258.6 314.3,259.8 311.9,256.9 309.5,261.0 307.1,258.1 304.7,260.4 302.3,262.2 300.6,257.5 298.2,259.2 296.4,262.2 293.4,258.1 291.0,261.0 289.2,256.0 286.8,259.8 285.0,261.0 283.3,261.0 281.0,257.5 278.6,260.4 276.2,257.5 273.2,259.6 270.8,257.5 268.4,259.6 266.0,258.1 263.0,257.5 261.2,261.0 258.8,258.1 256.4,259.6 254.0,257.5 251.1,259.6 248.1,260.1 244.5,259.6 241.5,261.3 239.1,259.2 236.1,260.4 233.7,258.1 230.7,261.0 228.3,259.8 225.9,258.1 223.9,262.2 221.7,258.1 220.0,257.5 217.6,260.8 215.2,256.3 212.2,261.0 209.8,258.1 207.4,259.2 205.0,260.4 203.9,257.2 200.4,262.0 196.8,259.2 194.4,261.0 192.6,259.6 190.2,260.8 187.8,262.2 185.8,259.6 183.4,264.6 181.2,262.2 179.4,260.1 176.4,259.2 174.0,257.5 172.8,256.0 171.1,260.8 166.3,259.2 163.3,259.6 161.5,257.5 160.3,261.6 158.5,259.6 152.5,259.6 148.3,258.6 145.3,260.4 142.9,259.2 141.1,260.1 138.2,258.4 135.8,260.4 133.4,258.9 131.0,258.1 128.6,259.6 126.8,257.5 125.0,259.8 122.8,261.0 120.4,259.6 117.7,260.4 115.6,259.8 112.9,257.5 109.6,259.2 106.0,259.6 103.0,259.8 100.0,259.2 98.2,261.0 95.2,259.6 92.2,259.2 89.3,257.5 86.3,258.4 83.3,259.6 79.7,259.8 76.3,259.6 73.7,261.0 71.1,257.7 68.3,261.0 65.6,257.7 63.5,261.3 60.6,260.4 57.9,258.1 55.8,259.2 52.8,259.6 49.8,260.8 48.0,259.8" fill="none" stroke="#2a2a2a" stroke-width="0.9"/><polyline points="46.8,376.5 49.8,378.5 52.2,376.5 54.6,375.5 55.8,376.1 57.0,362.4 58.2,369.5 59.1,382.7 60.6,386.3 62.9,371.9 65.3,363.6 66.5,376.7 67.7,386.3 69.5,379.1 71.3,376.9 73.7,376.1 75.5,374.6 77.3,377.7 80.3,372.5 84.5,380.1 86.6,376.1 89.9,383.3 92.2,377.9 94.6,382.1 97.0,370.1 98.8,373.7 100.6,372.5 102.4,367.4 104.8,371.9 107.2,389.3 109.6,374.3 113.8,378.1 116.5,368.9 119.2,383.3 122.2,378.5 125.0,377.9 126.4,372.5 128.3,372.5 131.0,377.3 134.0,373.1 135.2,374.1 136.4,368.3 137.6,369.5 138.4,376.7 139.6,390.5 141.1,383.9 144.1,379.7 146.5,365.3 148.3,370.1 150.1,379.7 151.9,380.5 153.7,377.9 157.1,366.5 159.7,376.1 160.9,373.1 162.7,383.9 166.9,379.7 168.7,380.3 170.5,380.1 173.4,372.5 175.2,375.3 177.6,374.9 180.0,379.1 183.0,376.1 185.4,384.5 190.8,372.5 193.8,377.3 198.0,372.5 201.0,371.0 202.8,372.5 205.0,377.9 207.2,375.8 210.4,380.3 213.4,360.9 214.8,371.9 217.0,389.9 220.0,382.7 222.7,369.5 225.6,380.3 228.3,378.1 232.5,380.1 234.9,376.1 236.3,378.5 240.3,367.7 243.3,373.1 247.1,383.6 249.3,383.3 251.4,369.5 252.8,372.5 256.2,390.5 259.4,378.5 262.4,366.5 265.4,372.5 268.4,389.3 270.6,370.1 273.2,374.9 275.6,372.5 276.8,375.5 278.0,370.1 281.6,375.5 285.0,380.3 287.4,370.1 289.8,374.9 293.1,383.9 296.7,366.5 298.4,371.9 300.6,392.9 302.7,385.1 305.3,374.9 307.1,374.3 309.5,371.3 313.1,366.9 315.9,383.3 318.5,378.5 320.3,380.9 323.0,371.3 324.5,370.7 327.5,386.9 330.7,370.7 333.4,373.7 335.8,374.9 337.6,380.9 340.0,377.9 343.6,377.9 345.4,371.3 347.2,375.5 350.2,369.8 352.0,391.1 354.6,390.1 355.8,375.5 358.3,370.1 360.4,376.1 362.4,375.5 364.8,383.9 367.2,374.3 369.4,373.1 372.9,365.9 375.1,375.5 376.5,385.1 377.5,380.3 378.9,383.3 384.3,373.7 386.3,378.5 390.3,368.9 395.7,381.5 398.3,365.3 399.5,376.1 402.8,387.5 405.2,379.3" fill="none" stroke="#2a2a2a" stroke-width="0.9"/></svg>
<div style="position:absolute;left:439.00px;top:263.93px;font-size:10px;line-height:10px;white-space:pre;font-family:'Liberation Sans', sans-serif;color:#111;">Y:</div>
<div style="position:absolute;left:440px;top:272px;width:24px;height:12px;box-sizing:border-box;border:1px solid #707070;background:#f0f0f0;"></div>
<div style="position:absolute;left:441px;top:273px;width:22px;height:10px;box-sizing:border-box;border-right:1px solid #909090;border-bottom:1px solid #909090;"></div>
<div style="position:absolute;left:443px;top:275px;width:18px;height:7px;box-sizing:border-box;border:1px dotted #555;"></div>
<div style="position:absolute;left:449.8px;top:277.3px;width:5px;height:1.2px;background:#1a1a1a;"></div>
<div style="position:absolute;left:451.7px;top:275.3px;width:1.2px;height:5px;background:#1a1a1a;"></div>
<div style="position:absolute;left:440px;top:284px;width:24px;height:12px;box-sizing:border-box;background:#f0f0f0;border-top:1px solid #fff;border-left:1px solid #fff;border-right:1px solid #696969;border-bottom:1px solid #696969;box-shadow:inset -1px -1px 0 #a0a0a0;"></div>
<div style="position:absolute;left:450.3px;top:290.0px;width:4px;height:1.2px;background:#1a1a1a;"></div>
<div style="position:absolute;left:439.00px;top:399.63px;font-size:10px;line-height:10px;white-space:pre;font-family:'Liberation Sans', sans-serif;color:#111;">Y:</div>
<div style="position:absolute;left:440px;top:408px;width:24px;height:11px;box-sizing:border-box;background:#f0f0f0;border-top:1px solid #fff;border-left:1px solid #fff;border-right:1px solid #696969;border-bottom:1px solid #696969;box-shadow:inset -1px -1px 0 #a0a0a0;"></div>
<div style="position:absolute;left:449.8px;top:413.0px;width:5px;height:1.2px;background:#1a1a1a;"></div>
<div style="position:absolute;left:451.7px;top:411.0px;width:1.2px;height:5px;background:#1a1a1a;"></div>
<div style="position:absolute;left:440px;top:419px;width:24px;height:12px;box-sizing:border-box;background:#f0f0f0;border-top:1px solid #fff;border-left:1px solid #fff;border-right:1px solid #696969;border-bottom:1px solid #696969;box-shadow:inset -1px -1px 0 #a0a0a0;"></div>
<div style="position:absolute;left:450.3px;top:425.3px;width:4px;height:1.2px;background:#1a1a1a;"></div>
<div style="position:absolute;left:503px;top:194px;width:159px;height:227px;box-sizing:border-box;border-top:1px solid #a0a0a0;border-left:1px solid #a0a0a0;border-right:1px solid #fff;border-bottom:1px solid #fff;"></div>
<div style="position:absolute;left:504px;top:195px;width:157px;height:225px;box-sizing:border-box;border-top:1px solid #f8f8f8;border-left:1px solid #f8f8f8;border-right:1px solid #e8e8e8;border-bottom:1px solid #e8e8e8;"></div>
<div style="position:absolute;left:514px;top:205px;width:46px;height:17px;box-sizing:border-box;background:#f0f0f0;border-top:1px solid #a0a0a0;border-left:1px solid #a0a0a0;border-right:1px solid #fff;border-bottom:1px solid #fff;box-shadow:inset 1px 1px 0 #b8b8b8;"></div>
<div style="position:absolute;left:513.00px;top:209.28px;font-size:10.3px;line-height:10.3px;white-space:pre;font-family:'Liberation Sans', sans-serif;width:46px;text-align:center;color:#111;">WARP</div>
<div style="position:absolute;left:560px;top:205px;width:44px;height:17px;box-sizing:border-box;background:#f0f0f0;border-top:1px solid #a0a0a0;border-left:1px solid #a0a0a0;border-right:1px solid #fff;border-bottom:1px solid #fff;box-shadow:inset 1px 1px 0 #b8b8b8;"></div>
<div style="position:absolute;left:559.00px;top:209.28px;font-size:10.3px;line-height:10.3px;white-space:pre;font-family:'Liberation Sans', sans-serif;width:44px;text-align:center;color:#111;">WEFT</div>
<div style="position:absolute;left:604px;top:205px;width:45px;height:17px;box-sizing:border-box;background:#f0f0f0;border-top:1px solid #a0a0a0;border-left:1px solid #a0a0a0;border-right:1px solid #fff;border-bottom:1px solid #fff;box-shadow:inset 1px 1px 0 #b8b8b8;"></div>
<div style="position:absolute;left:603.00px;top:209.28px;font-size:10.3px;line-height:10.3px;white-space:pre;font-family:'Liberation Sans', sans-serif;width:45px;text-align:center;color:#111;">MEAN</div>
<div style="position:absolute;left:514px;top:222px;width:135px;height:17px;box-sizing:border-box;background:#f0f0f0;border-top:1px solid #a0a0a0;border-left:1px solid #a0a0a0;border-right:1px solid #fff;border-bottom:1px solid #fff;box-shadow:inset 1px 1px 0 #b8b8b8;"></div>
<div style="position:absolute;left:514.00px;top:226.38px;font-size:10.3px;line-height:10.3px;white-space:pre;font-family:'Liberation Sans', sans-serif;width:136px;text-align:center;color:#111;">MIU</div>
<div style="position:absolute;left:514px;top:239px;width:46px;height:17px;box-sizing:border-box;background:#fff;border-top:1px solid #a0a0a0;border-left:1px solid #a0a0a0;border-right:1px solid #fff;border-bottom:1px solid #fff;box-shadow:inset 1px 1px 0 #b8b8b8;"></div>
<div style="position:absolute;left:560px;top:239px;width:44px;height:17px;box-sizing:border-box;background:#fff;border-top:1px solid #a0a0a0;border-left:1px solid #a0a0a0;border-right:1px solid #fff;border-bottom:1px solid #fff;box-shadow:inset 1px 1px 0 #b8b8b8;"></div>
<div style="position:absolute;left:604px;top:239px;width:45px;height:17px;box-sizing:border-box;background:#fff;border-top:1px solid #a0a0a0;border-left:1px solid #a0a0a0;border-right:1px solid #fff;border-bottom:1px solid #fff;box-shadow:inset 1px 1px 0 #b8b8b8;"></div>
<div style="position:absolute;left:513.00px;top:241.63px;font-size:10px;line-height:10px;white-space:pre;font-family:'Liberation Sans', sans-serif;width:44px;text-align:right;color:#111;">0.173</div>
<div style="position:absolute;left:514px;top:256px;width:135px;height:17px;box-sizing:border-box;background:#f0f0f0;border-top:1px solid #a0a0a0;border-left:1px solid #a0a0a0;border-right:1px solid #fff;border-bottom:1px solid #fff;box-shadow:inset 1px 1px 0 #b8b8b8;"></div>
<div style="position:absolute;left:514.00px;top:260.38px;font-size:10.3px;line-height:10.3px;white-space:pre;font-family:'Liberation Sans', sans-serif;width:136px;text-align:center;color:#111;">MMD</div>
<div style="position:absolute;left:514px;top:273px;width:46px;height:17px;box-sizing:border-box;background:#fff;border-top:1px solid #a0a0a0;border-left:1px solid #a0a0a0;border-right:1px solid #fff;border-bottom:1px solid #fff;box-shadow:inset 1px 1px 0 #b8b8b8;"></div>
<div style="position:absolute;left:560px;top:273px;width:44px;height:17px;box-sizing:border-box;background:#fff;border-top:1px solid #a0a0a0;border-left:1px solid #a0a0a0;border-right:1px solid #fff;border-bottom:1px solid #fff;box-shadow:inset 1px 1px 0 #b8b8b8;"></div>
<div style="position:absolute;left:604px;top:273px;width:45px;height:17px;box-sizing:border-box;background:#fff;border-top:1px solid #a0a0a0;border-left:1px solid #a0a0a0;border-right:1px solid #fff;border-bottom:1px solid #fff;box-shadow:inset 1px 1px 0 #b8b8b8;"></div>
<div style="position:absolute;left:513.00px;top:275.63px;font-size:10px;line-height:10px;white-space:pre;font-family:'Liberation Sans', sans-serif;width:44px;text-align:right;color:#111;">0.0095</div>
<div style="position:absolute;left:514px;top:290px;width:135px;height:17px;box-sizing:border-box;background:#f0f0f0;border-top:1px solid #a0a0a0;border-left:1px solid #a0a0a0;border-right:1px solid #fff;border-bottom:1px solid #fff;box-shadow:inset 1px 1px 0 #b8b8b8;"></div>
<div style="position:absolute;left:519.00px;top:293.96px;font-size:10.8px;line-height:10.8px;white-space:pre;font-family:'Liberation Sans', sans-serif;width:136px;text-align:center;color:#111;">SMD  (um)</div>
<div style="position:absolute;left:514px;top:307px;width:46px;height:16px;box-sizing:border-box;background:#fff;border-top:1px solid #a0a0a0;border-left:1px solid #a0a0a0;border-right:1px solid #fff;border-bottom:1px solid #fff;box-shadow:inset 1px 1px 0 #b8b8b8;"></div>
<div style="position:absolute;left:560px;top:307px;width:44px;height:16px;box-sizing:border-box;background:#fff;border-top:1px solid #a0a0a0;border-left:1px solid #a0a0a0;border-right:1px solid #fff;border-bottom:1px solid #fff;box-shadow:inset 1px 1px 0 #b8b8b8;"></div>
<div style="position:absolute;left:604px;top:307px;width:45px;height:16px;box-sizing:border-box;background:#fff;border-top:1px solid #a0a0a0;border-left:1px solid #a0a0a0;border-right:1px solid #fff;border-bottom:1px solid #fff;box-shadow:inset 1px 1px 0 #b8b8b8;"></div>
<div style="position:absolute;left:513.00px;top:309.63px;font-size:10px;line-height:10px;white-space:pre;font-family:'Liberation Sans', sans-serif;width:44px;text-align:right;color:#111;">4.455</div>
<div style="position:absolute;left:6px;top:442px;width:661px;height:20px;box-sizing:border-box;background:#f0f0f0;border-top:1px solid #a8a8a8;border-left:1px solid #c8c8c8;"></div>
<svg style="position:absolute;left:655px;top:450px" width="12" height="12"><path d="M11.5 2.5L2.5 11.5M11.5 6.5L6.5 11.5M11.5 9.8L9.8 11.5" stroke="#a8a8a8" stroke-width="1.3"/><path d="M12 3.6L3.6 12M12 7.6L7.6 12" stroke="#fff" stroke-width="0.8"/></svg>
</body></html>
